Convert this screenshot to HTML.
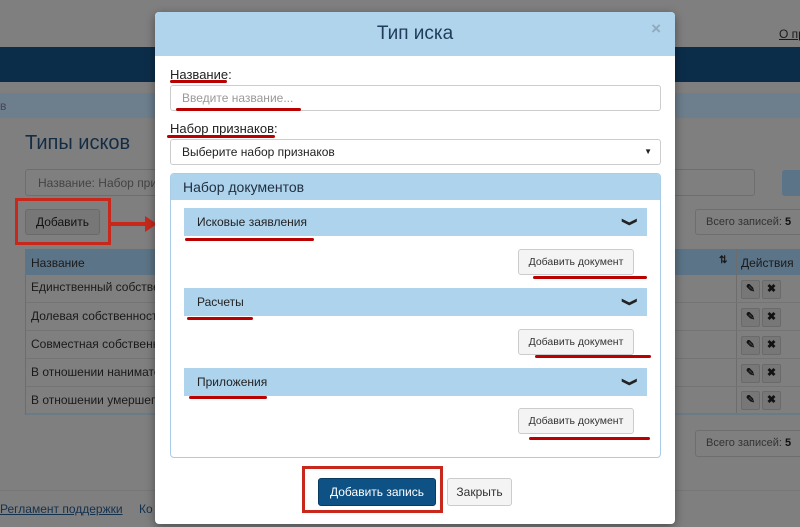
<!DOCTYPE html>
<html><head><meta charset="utf-8"><style>
*{box-sizing:border-box;margin:0;padding:0}
html{background:#7f7f7f}
body{width:800px;height:527px;overflow:hidden;background:#7f7f7f;font-family:"Liberation Sans",sans-serif;position:relative;color:#333}
.a{position:absolute;white-space:nowrap}
.bgt{color:#1a1a1a;font-size:12px}
.ab{position:absolute;width:19px;height:19px;background:#777;border:1px solid #6a6a6a;border-radius:2px;font-size:11px;text-align:center;line-height:17px;color:#111;font-weight:bold}
.bar{position:absolute;left:184px;width:463px;height:28px;background:#aed3ec;font-size:12px;color:#222;padding-left:13px;line-height:28px}
.bar span{position:absolute;right:13px;top:0;font-size:11px;font-weight:bold;transform:rotate(90deg) scaleY(1.3)}
.btn{position:absolute;left:518px;width:116px;height:26px;background:#f4f4f4;border:1px solid #ccc;border-radius:3px;font-size:10.5px;text-align:center;line-height:24px;color:#333}
.red{position:absolute;height:3px;background:#b00;border-radius:2px}
</style></head><body>
<div class="a" style="left:0;top:47px;width:800px;height:35px;background:#0c2d4a"></div>
<div class="a" style="left:0;top:93px;width:800px;height:25px;background:#6d7e8d"></div>
<div class="a bgt" style="left:0;top:99px;color:#445">в</div>
<div class="a bgt" style="left:779px;top:27px;text-decoration:underline;font-size:12px">О пр</div>
<div class="a" style="left:25px;top:132px;font-size:20px;color:#142c44">Типы исков</div>
<div class="a" style="left:25px;top:169px;width:730px;height:27px;border:1px solid #6e6e6e;border-radius:3px;background:#7f7f7f"></div>
<div class="a bgt" style="left:38px;top:176px;color:#444">Название: Набор при</div>
<div class="a" style="left:782px;top:170px;width:30px;height:26px;background:#5b7488;border-radius:3px"></div>
<div class="a" style="left:25px;top:209px;width:75px;height:26px;background:#777;border:1px solid #6a6a6a;border-radius:3px;font-size:12px;line-height:24px;text-align:center;color:#111">Добавить</div>
<div class="a" style="left:695px;top:209px;width:120px;height:26px;border:1px solid #6e6e6e;border-radius:3px;font-size:11px;line-height:24px;padding-left:10px;color:#333">Всего записей: <b style="color:#111">5</b></div>
<div class="a" style="left:25px;top:249px;width:775px;height:26px;background:#5c7487"></div>
<div class="a bgt" style="left:31px;top:256px">Название</div>
<div class="a bgt" style="left:719px;top:255px;font-size:10px;font-weight:bold">⇅</div>
<div class="a" style="left:736px;top:249px;width:1px;height:165px;background:#6d6d6d"></div>
<div class="a bgt" style="left:741px;top:256px">Действия</div>
<div class="a bgt" style="left:31px;top:280px">Единственный собстве</div>
<div class="a bgt" style="left:31px;top:309px">Долевая собственност</div>
<div class="a bgt" style="left:31px;top:337px">Совместная собственн</div>
<div class="a bgt" style="left:31px;top:365px">В отношении нанимате</div>
<div class="a bgt" style="left:31px;top:393px">В отношении умершег</div>
<div class="a" style="left:25px;top:302px;width:775px;height:1px;background:#747474"></div>
<div class="a" style="left:25px;top:330px;width:775px;height:1px;background:#747474"></div>
<div class="a" style="left:25px;top:358px;width:775px;height:1px;background:#747474"></div>
<div class="a" style="left:25px;top:386px;width:775px;height:1px;background:#747474"></div>
<div class="a" style="left:25px;top:413px;width:775px;height:2px;background:#6a7b88"></div>
<div class="a" style="left:25px;top:275px;width:1px;height:140px;background:#6d6d6d"></div>
<div class="ab" style="left:741px;top:280px">✎</div><div class="ab" style="left:762px;top:280px">✖</div>
<div class="ab" style="left:741px;top:308px">✎</div><div class="ab" style="left:762px;top:308px">✖</div>
<div class="ab" style="left:741px;top:336px">✎</div><div class="ab" style="left:762px;top:336px">✖</div>
<div class="ab" style="left:741px;top:364px">✎</div><div class="ab" style="left:762px;top:364px">✖</div>
<div class="ab" style="left:741px;top:391px">✎</div><div class="ab" style="left:762px;top:391px">✖</div>
<div class="a" style="left:695px;top:430px;width:120px;height:27px;border:1px solid #6e6e6e;border-radius:3px;font-size:11px;line-height:25px;padding-left:10px;color:#333">Всего записей: <b style="color:#111">5</b></div>
<div class="a" style="left:0;top:490px;width:800px;height:1px;background:#777"></div>
<div class="a bgt" style="left:0;top:502px;color:#14314e;text-decoration:underline">Регламент поддержки</div>
<div class="a bgt" style="left:139px;top:502px;color:#14314e">Ко</div>
<div class="a" style="left:15px;top:198px;width:96px;height:47px;border:3px solid #c8281c"></div>
<div class="a" style="left:111px;top:222px;width:36px;height:4px;background:#c8281c"></div>
<div class="a" style="left:145px;top:216px;width:0;height:0;border-top:8px solid transparent;border-bottom:8px solid transparent;border-left:12px solid #c8281c"></div>
<div class="a" style="left:155px;top:12px;width:520px;height:512px;background:#fff;border-radius:4px;box-shadow:0 3px 10px rgba(0,0,0,.4);overflow:hidden">
<div style="height:44px;background:#b0d4ec;text-align:center;font-size:19px;line-height:44px;color:#1f3d5a">Тип иска</div>
<div class="a" style="right:14px;top:7px;color:#8fa9bd;font-size:17px;font-weight:bold">×</div>
</div>
<div class="a" style="left:170px;top:67px;font-size:13px;color:#222">Название:</div>
<div class="a" style="left:170px;top:85px;width:491px;height:26px;border:1px solid #ccc;border-radius:3px;font-size:12px;color:#999;padding-left:11px;line-height:24px">Введите название...</div>
<div class="a" style="left:170px;top:121px;font-size:13px;color:#222">Набор признаков:</div>
<div class="a" style="left:170px;top:139px;width:491px;height:26px;border:1px solid #ccc;border-radius:3px;font-size:12px;color:#222;padding-left:11px;line-height:24px">Выберите набор признаков<span style="position:absolute;right:8px;top:0;font-size:8px">▼</span></div>
<div class="a" style="left:170px;top:173px;width:491px;height:285px;border:1px solid #a9cde6;border-radius:4px;overflow:hidden">
<div style="height:26px;background:#aed3ec;font-size:14px;line-height:26px;padding-left:12px;color:#1f2f3f">Набор документов</div></div>
<div class="bar" style="top:208px">Исковые заявления<span>❯</span></div>
<div class="btn" style="top:249px">Добавить документ</div>
<div class="bar" style="top:288px">Расчеты<span>❯</span></div>
<div class="btn" style="top:329px">Добавить документ</div>
<div class="bar" style="top:368px">Приложения<span>❯</span></div>
<div class="btn" style="top:408px">Добавить документ</div>
<div class="a" style="left:318px;top:478px;width:118px;height:28px;background:#0e5184;border:1px solid #093c63;border-radius:3px;color:#fff;font-size:12px;text-align:center;line-height:26px">Добавить запись</div>
<div class="a" style="left:447px;top:478px;width:65px;height:28px;background:#f4f4f4;border:1px solid #ccc;border-radius:3px;font-size:12px;text-align:center;line-height:26px">Закрыть</div>
<div class="a" style="left:302px;top:466px;width:141px;height:47px;border:3px solid #c8281c"></div>
<div class="red" style="left:170px;top:80px;width:57px"></div>
<div class="red" style="left:176px;top:108px;width:125px"></div>
<div class="red" style="left:167px;top:135px;width:108px"></div>
<div class="red" style="left:185px;top:238px;width:129px"></div>
<div class="red" style="left:533px;top:276px;width:114px"></div>
<div class="red" style="left:187px;top:317px;width:66px"></div>
<div class="red" style="left:535px;top:355px;width:116px"></div>
<div class="red" style="left:189px;top:396px;width:78px"></div>
<div class="red" style="left:529px;top:437px;width:121px"></div>
</body></html>
